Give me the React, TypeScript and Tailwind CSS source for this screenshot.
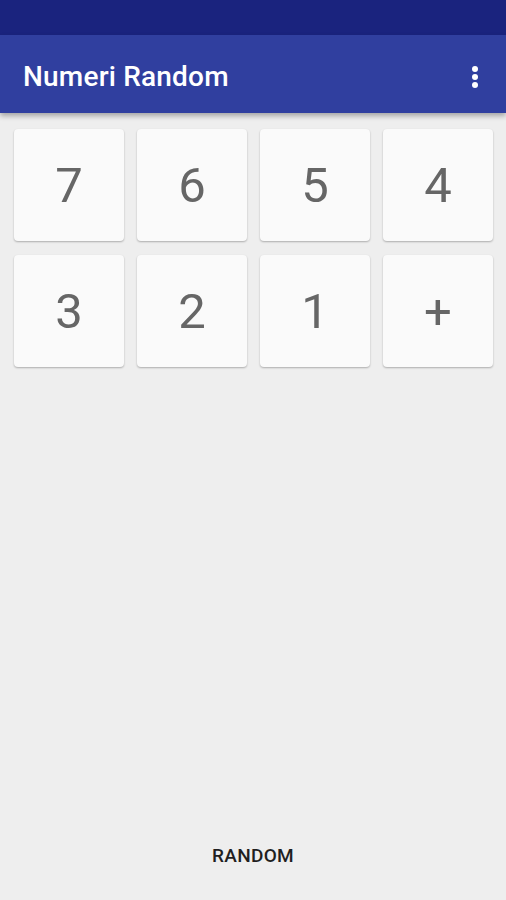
import React from 'react';

const keys = ['7', '6', '5', '4', '3', '2', '1', '+'];

export default function App() {
  return (
    <div
      className="w-[506px] h-[900px] flex flex-col bg-[#eeeeee] overflow-hidden"
      style={{ fontFamily: 'Roboto, "Liberation Sans", sans-serif' }}
    >
      {/* status bar */}
      <div className="h-[35px] bg-[#1a237e] shrink-0" />

      {/* toolbar */}
      <div className="relative z-10 h-[78px] shrink-0 bg-[#303f9f] flex items-center justify-between pl-[23px] pr-[27px] pt-[5px] shadow-[0_3px_5px_rgba(0,0,0,0.3)]">
        <h1 className="text-white text-[28px] font-medium tracking-[0.2px]">Numeri Random</h1>
        <svg width="8" height="24" viewBox="0 0 8 24" className="fill-white">
          <circle cx="4" cy="4" r="3" />
          <circle cx="4" cy="12" r="3" />
          <circle cx="4" cy="20" r="3" />
        </svg>
      </div>

      {/* keypad */}
      <div className="grid grid-cols-4 gap-x-[13px] gap-y-[14px] pl-[14px] pr-[13px] pt-[16px]">
        {keys.map((k) => (
          <button
            key={k}
            className="h-[112px] bg-[#fafafa] rounded-[4px] shadow-[0_1px_2px_rgba(0,0,0,0.28)] flex items-center justify-center text-[49px] text-[#666666] leading-none"
          >
            {k}
          </button>
        ))}
      </div>

      <div className="flex-1" />

      {/* bottom action */}
      <div className="h-[110px] shrink-0 flex items-start justify-center pt-[52px]">
        <span className="text-[19px] font-medium text-[#1f1f1f] tracking-[0.3px]">RANDOM</span>
      </div>
    </div>
  );
}
